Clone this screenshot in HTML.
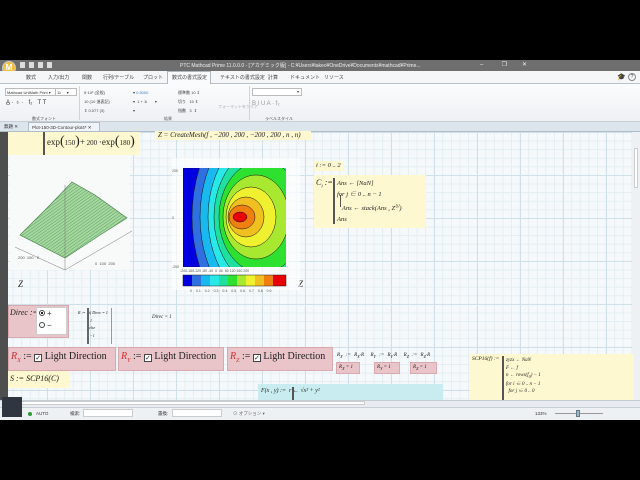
<!DOCTYPE html>
<html><head><meta charset="utf-8"><style>
*{margin:0;padding:0;box-sizing:border-box}
body{width:640px;height:480px;background:#000;position:relative;overflow:hidden;font-family:"Liberation Sans","Noto Sans CJK JP",sans-serif;font-size:5px;color:#333;white-space:nowrap}
.a{position:absolute}
.m{font-family:"Liberation Serif","Noto Serif CJK SC",serif;font-style:italic;color:#222}
.grid{background-color:#f5f9fb;background-image:linear-gradient(#cfe0e8 1px,transparent 1px),linear-gradient(90deg,#cfe0e8 1px,transparent 1px),linear-gradient(#e4eef3 1px,transparent 1px),linear-gradient(90deg,#e4eef3 1px,transparent 1px);background-size:43px 43px,43px 43px,8.6px 8.6px,8.6px 8.6px;background-position:-4px 0}
.y{background:#fdf8cf}
.p{background:#e9c4c8;border:1px solid #d8a9ae}
.ld{font-family:"Liberation Serif",serif;font-size:10px;color:#222;font-style:normal}
.cb{display:inline-block;width:8px;height:8px;border:1px solid #444;background:#fff;font-size:7px;line-height:6px;text-align:center;vertical-align:-1px}
.t{position:absolute;top:74px;color:#444}
</style></head><body>
<div class="a" style="left:0;top:60px;width:640px;height:11px;background:#6e6e6e"></div>
<div class="a" style="left:2px;top:61px;width:14px;height:14px;border-radius:50%;background:#f1c040;border:1px solid #c8c8c8;color:#fff;font-size:8px;font-weight:bold;text-align:center;line-height:12px">M</div>
<div class="a" style="left:20px;top:62px;width:34px;height:6px;background:repeating-linear-gradient(90deg,#ddd 0 5px,transparent 5px 9px)"></div>
<div class="a" style="left:180px;top:62px;color:#eee;font-size:5px">PTC Mathcad Prime 11.0.0.0 - [アカデミック版] - C:¥Users¥takeo¥OneDrive¥Documents¥mathcad¥Prime...</div>
<div class="a" style="left:480px;top:61px;color:#eee;font-size:6px">–&nbsp;&nbsp;&nbsp;&nbsp;&nbsp;&nbsp;&nbsp;&nbsp;&nbsp;&nbsp;&nbsp;❐&nbsp;&nbsp;&nbsp;&nbsp;&nbsp;&nbsp;&nbsp;&nbsp;&nbsp;✕</div>
<div class="a" style="left:0;top:71px;width:640px;height:13px;background:#f4f6f8;border-bottom:1px solid #b8c0c8"></div>
<div class="t" style="left:26px">数式</div>
<div class="t" style="left:48px">入力/出力</div>
<div class="t" style="left:82px">関数</div>
<div class="t" style="left:103px">行列/テーブル</div>
<div class="t" style="left:143px">プロット</div>
<div class="a" style="left:167px;top:71px;width:44px;height:14px;background:#fafbfc;border:1px solid #b0b8c0;border-bottom:none"></div>
<div class="t" style="left:172px">数式の書式設定</div>
<div class="t" style="left:220px">テキストの書式設定</div>
<div class="t" style="left:268px">計算</div>
<div class="t" style="left:290px">ドキュメント</div>
<div class="t" style="left:324px">リソース</div>
<div class="a" style="left:617px;top:73px;font-size:7px">🎓</div>
<div class="a" style="left:628px;top:73px;width:8px;height:8px;border-radius:50%;border:1px solid #888;font-size:5px;text-align:center;line-height:6px">?</div>
<div class="a" style="left:0;top:84px;width:640px;height:38px;background:linear-gradient(#fbfcfd,#eef1f4);border-bottom:1px solid #c8ced4"></div>
<div class="a" style="left:5px;top:88px;width:52px;height:8px;background:#fff;border:1px solid #bbb;font-size:4px;padding:1px">Mathcad UniMath Prim ▾</div>
<div class="a" style="left:55px;top:88px;width:22px;height:8px;background:#fff;border:1px solid #bbb;font-size:4px;padding:1px">11 &nbsp;&nbsp;&nbsp;&nbsp;▾</div>
<div class="a" style="left:6px;top:100px;font-size:6px">A̲ · ♁ · &nbsp;&nbsp;f₂ &nbsp;&nbsp;T T</div>
<div class="a" style="left:32px;top:116px;font-size:4px;color:#555">数式フォント</div>
<div class="a" style="left:79px;top:86px;width:1px;height:34px;background:#d0d4d8"></div>
<div class="a" style="left:84px;top:88px;font-size:4px;line-height:9px;color:#444">5·10³ (全般)<br>10 (10 進表記)<br>⇕ 0.077 (3)</div>
<div class="a" style="left:133px;top:88px;font-size:4px;line-height:9px;color:#444">▾ <span style="color:#3a7fc0">0.5000</span><br>▾ &nbsp;1 + 1i &nbsp;&nbsp;&nbsp;&nbsp;&nbsp;&nbsp;▾<br>▾</div>
<div class="a" style="left:178px;top:88px;font-size:4px;line-height:9px;color:#444">標準数 10 ⇕<br>切り &nbsp;&nbsp;15 ⇕<br>指数 &nbsp;&nbsp;3 &nbsp;⇕</div>
<div class="a" style="left:164px;top:116px;font-size:4px;color:#555">結果</div>
<div class="a" style="left:218px;top:104px;font-size:4px;color:#aaa">フォーマットをクリア</div>
<div class="a" style="left:249px;top:86px;width:1px;height:34px;background:#d0d4d8"></div>
<div class="a" style="left:252px;top:88px;width:50px;height:8px;background:#fff;border:1px solid #bbb;font-size:4px;text-align:right;padding-right:2px">▾</div>
<div class="a" style="left:252px;top:101px;font-size:6px;color:#999">B I U A · f₂</div>
<div class="a" style="left:265px;top:116px;font-size:4px;color:#555">ラベルスタイル</div>
<div class="a" style="left:0;top:122px;width:640px;height:10px;background:#dce4ec;border-bottom:1px solid #b0bcc8"></div>
<div class="a" style="left:4px;top:124px;font-size:4.5px">無題 ✕</div>
<div class="a" style="left:28px;top:122px;width:72px;height:10px;background:#f0f4f8;border:1px solid #b0bcc8;font-size:4.5px;padding:2px 0 0 3px">Plot-150-3D-Contour-plot4* ✕</div>
<div class="a grid" style="left:8px;top:132px;width:624px;height:268px"></div>
<div class="a" style="left:0;top:132px;width:8px;height:268px;background:#4e4e4e"></div>
<div class="a" style="left:632px;top:132px;width:8px;height:268px;background:#eef1f4"></div>
<div class="a" style="left:634px;top:148px;width:4px;height:40px;background:#fff;border:1px solid #ccc"></div>
<div class="a y" style="left:8px;top:132px;width:132px;height:23px"></div>
<div class="a" style="left:43px;top:132px;width:2px;height:23px;background:#555"></div>
<div class="a m" style="left:47px;top:134px;font-size:9px;font-style:normal">exp<span style="font-size:14px">(</span><span style="font-size:7px">150</span><span style="font-size:14px">)</span>+<span style="font-size:7px"> 200 </span>·exp<span style="font-size:14px">(</span><span style="font-size:7px">180</span><span style="font-size:14px">)</span></div>
<div class="a y m" style="left:155px;top:131px;width:156px;height:9px;font-size:7px;padding-left:3px;overflow:hidden">Z = CreateMesh(f , −200 , 200 , −200 , 200 , n , n)</div>
<div class="a" style="left:10px;top:155px;width:120px;height:115px;background:#f8faf9"></div>
<svg class="a" style="left:10px;top:155px" width="125" height="120" viewBox="0 0 125 120">
<defs><pattern id="st" width="2.5" height="2.5" patternUnits="userSpaceOnUse" patternTransform="rotate(-35)"><rect width="3" height="3" fill="#a6d8a0"/><line x1="0" y1="0" x2="3" y2="0" stroke="#3e8a48" stroke-width="0.7"/></pattern></defs>
<polygon points="10,80 40,50 62,27 85,40 117,63 90,80 55,103" fill="url(#st)" stroke="#3d7d40" stroke-width="0.6"/>
<line x1="55" y1="115" x2="122" y2="76" stroke="#777" stroke-width="0.5"/>
<line x1="55" y1="115" x2="5" y2="92" stroke="#777" stroke-width="0.5"/>
<line x1="55" y1="115" x2="55" y2="30" stroke="#777" stroke-width="0.5"/>
<text x="8" y="104" font-size="4" fill="#555">200 &#160;100 &#160; 0</text>
<text x="85" y="110" font-size="4" fill="#555">0 &#160;100 &#160;200</text>
</svg>
<div class="a m" style="left:18px;top:279px;font-size:9px">Z</div>
<div class="a m" style="left:298px;top:279px;font-size:9px">Z</div>
<svg class="a" style="left:172px;top:158px" width="128" height="132" viewBox="0 0 128 132">
<rect x="0" y="0" width="128" height="132" fill="#fff" opacity="0.6"/>
<defs><clipPath id="cp"><rect x="11" y="10" width="103" height="99"/></clipPath></defs>
<g clip-path="url(#cp)" stroke="#111" stroke-width="0.5">
<rect x="11" y="10" width="103" height="99" fill="#0000e0"/>
<ellipse cx="120" cy="59" rx="100" ry="130" fill="#2f6fe0"/>
<ellipse cx="112" cy="59" rx="84" ry="110" fill="#19b8ee"/>
<ellipse cx="104" cy="59" rx="68" ry="90" fill="#28e8e8"/>
<ellipse cx="97" cy="59" rx="55" ry="72" fill="#20e0a0"/>
<ellipse cx="90" cy="59" rx="43" ry="56" fill="#2ee030"/>
<ellipse cx="84" cy="59" rx="33" ry="42" fill="#a8e830"/>
<ellipse cx="79" cy="59" rx="25" ry="30" fill="#eef030"/>
<ellipse cx="74" cy="59" rx="18" ry="20" fill="#f0c020"/>
<ellipse cx="70" cy="59" rx="13" ry="12" fill="#ef8010"/>
<ellipse cx="68" cy="59" rx="7" ry="5" fill="#e80000"/>
</g>
<text x="0" y="14" font-size="3.5" fill="#555">200</text>
<text x="0" y="61" font-size="3.5" fill="#555">0</text>
<text x="0" y="110" font-size="3.5" fill="#555">-200</text>
<text x="8" y="114" font-size="3.5" fill="#555">-200-160-120 -80 -40 &#160;0 &#160;40 &#160;80 120 160 200</text>
<g transform="translate(11,117)">
<rect x="0" width="9" height="11" fill="#0000e0"/><rect x="9" width="9" height="11" fill="#2f6fe0"/><rect x="18" width="9" height="11" fill="#19b8ee"/><rect x="27" width="9" height="11" fill="#28e8e8"/><rect x="36" width="9" height="11" fill="#20e0a0"/><rect x="45" width="9" height="11" fill="#2ee030"/><rect x="54" width="9" height="11" fill="#a8e830"/><rect x="63" width="9" height="11" fill="#eef030"/><rect x="72" width="9" height="11" fill="#f0c020"/><rect x="81" width="9" height="11" fill="#ef8010"/><rect x="90" width="13" height="11" fill="#e80000"/>
<rect x="0" width="103" height="11" fill="none" stroke="#222" stroke-width="0.5"/></g>
</svg>
<div class="a" style="left:190px;top:289px;font-size:3.5px;color:#555;word-spacing:3px">0 0.1 0.2 0.3 0.4 0.5 0.6 0.7 0.8 0.9</div>
<div class="a y m" style="left:314px;top:161px;width:30px;height:10px;font-size:6.5px;padding:1px 2px">i := 0 .. 2</div>
<div class="a y m" style="left:314px;top:175px;width:112px;height:53px"></div>
<div class="a m" style="left:316px;top:178px;font-size:8px">C<sub style="font-size:5px">i</sub> :=</div>
<div class="a" style="left:333px;top:178px;width:2px;height:46px;background:#555"></div>
<div class="a m" style="left:337px;top:178px;font-size:6.5px;line-height:11px">Ans ← [NaN]<br>for j ∈ 0 .. n − 1<br>&nbsp;&nbsp;&nbsp;Ans ← stack(Ans , Z<sup style="font-size:4px">⟨j⟩</sup>)<br>Ans</div>
<div class="a" style="left:340px;top:195px;width:1px;height:12px;background:#555"></div>
<div class="a p" style="left:8px;top:305px;width:61px;height:33px"></div>
<div class="a m" style="left:10px;top:308px;font-size:8px">Direc :=</div>
<div class="a" style="left:36px;top:307px;width:31px;height:28px;background:#fff;border:1px solid #ccc;font-size:8px;line-height:12px;padding-left:10px">+<br>−</div>
<div class="a" style="left:39px;top:310px;width:6px;height:6px;border-radius:50%;border:1px solid #444;background:radial-gradient(#222 40%,#fff 45%)"></div>
<div class="a" style="left:39px;top:322px;width:6px;height:6px;border-radius:50%;border:1px solid #444;background:#fff"></div>
<div class="a m" style="left:78px;top:310px;font-size:4px">R :=</div>
<div class="a" style="left:87px;top:308px;width:2px;height:36px;background:#666"></div>
<div class="a" style="left:111px;top:308px;width:1px;height:36px;background:#999"></div>
<div class="a m" style="left:89px;top:309px;font-size:4px;line-height:7.5px">if Direc = 1<br>&nbsp;1<br>else<br>&nbsp;−1</div>
<div class="a m" style="left:152px;top:315px;font-size:5px">Direc = 1</div>
<div class="a p ld" style="left:8px;top:347px;width:108px;height:24px;padding:3px 2px"><i style="color:#c33">R<sub style="font-size:6px">X</sub></i> := <span class="cb">✓</span> Light Direction</div>
<div class="a p ld" style="left:118px;top:347px;width:106px;height:24px;padding:3px 2px"><i style="color:#c33">R<sub style="font-size:6px">Y</sub></i> := <span class="cb">✓</span> Light Direction</div>
<div class="a p ld" style="left:227px;top:347px;width:106px;height:24px;padding:3px 2px"><i style="color:#c33">R<sub style="font-size:6px">Z</sub></i> := <span class="cb">✓</span> Light Direction</div>
<div class="a m" style="left:337px;top:353px;font-size:5px;word-spacing:2px">R<sub>X</sub> := R<sub>X</sub>·R &nbsp;R<sub>Y</sub> := R<sub>Y</sub>·R &nbsp;R<sub>Z</sub> := R<sub>Z</sub>·R</div>
<div class="a p m" style="left:336px;top:362px;width:24px;height:12px;font-size:5px;padding:2px">R<sub>X</sub> = 1</div>
<div class="a p m" style="left:374px;top:362px;width:26px;height:12px;font-size:5px;padding:2px">R<sub>Y</sub> = 1</div>
<div class="a p m" style="left:410px;top:362px;width:27px;height:12px;font-size:5px;padding:2px">R<sub>Z</sub> = 1</div>
<div class="a y m" style="left:8px;top:371px;width:62px;height:17px;font-size:8px;padding:3px 2px">S := SCP16(C)</div>
<div class="a m" style="left:258px;top:384px;width:185px;height:16px;background:#c8ecef;font-size:6px;padding:4px 3px">F(x , y) := &nbsp;r ← √x² + y²</div>
<div class="a" style="left:292px;top:387px;width:2px;height:13px;background:#555"></div>
<div class="a y" style="left:470px;top:354px;width:164px;height:46px"></div>
<div class="a m" style="left:472px;top:356px;font-size:5.5px">SCP16(f) :=</div>
<div class="a" style="left:502px;top:356px;width:2px;height:44px;background:#555"></div>
<div class="a m" style="left:506px;top:357px;font-size:5px;line-height:7.5px">zyzx ← NaN<br>F ← f<br>n ← rows(f<sub>0</sub>) − 1<br>for i ∈ 0 .. n − 1<br>&nbsp;&nbsp;for j ∈ 0 .. 0</div>
<div class="a" style="left:0;top:400px;width:640px;height:7px;background:#e8ecf0;border-top:1px solid #c4ccd4"></div>
<div class="a" style="left:10px;top:401px;width:355px;height:4px;background:#fff;border:1px solid #ccc"></div>
<div class="a" style="left:0;top:407px;width:640px;height:13px;background:#eef1f4;border-top:1px solid #c8ced4"></div>
<div class="a" style="left:2px;top:397px;width:20px;height:20px;background:#2f3640"></div>
<div class="a" style="left:28px;top:412px;width:4px;height:4px;border-radius:50%;background:#2a9a3a"></div>
<div class="a" style="left:36px;top:411px;font-size:4.5px">AUTO</div>
<div class="a" style="left:70px;top:411px;font-size:4.5px">検索:</div>
<div class="a" style="left:83px;top:409px;width:50px;height:8px;background:#fff;border:1px solid #ccc"></div>
<div class="a" style="left:158px;top:411px;font-size:4.5px">置換:</div>
<div class="a" style="left:172px;top:409px;width:50px;height:8px;background:#fff;border:1px solid #ccc"></div>
<div class="a" style="left:233px;top:411px;font-size:4.5px;color:#666">⊙ オプション ▾</div>
<div class="a" style="left:535px;top:411px;font-size:4.5px">133%</div>
<div class="a" style="left:555px;top:413px;width:48px;height:1px;background:#999"></div>
<div class="a" style="left:576px;top:410px;width:4px;height:7px;background:#9bc;border:1px solid #678"></div>
<div class="a" style="left:0;top:420px;width:640px;height:60px;background:#000"></div>
</body></html>
